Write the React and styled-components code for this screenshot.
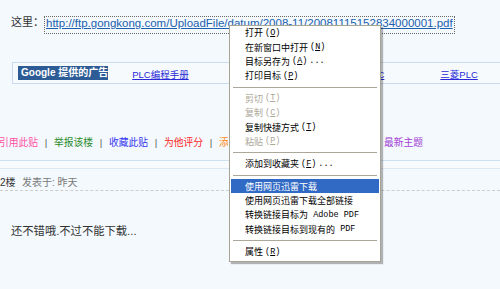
import styled, { createGlobalStyle } from 'styled-components';

const GlobalStyle = createGlobalStyle`
	html, body {
		margin: 0;
		padding: 0;
	}
	body {
		background: #f3f9fd;
		font-family: "Liberation Sans", "Noto Sans CJK SC", sans-serif;
		overflow: hidden;
	}
`;

// links and actions that sit under the context menu are kept for layout,
// but hidden (or clipped) the way the menu covers them
const adLinks = [
	{ text: 'PLC编程手册' },
	{ text: 'PLC培训', hidden: true },
	{ text: '西门子PLC', clip: '0 0 0 41px' },
	{ text: '三菱PLC' },
];

const actions = [
	{ text: '引用此贴', color: '#ff4fa3' },
	{ text: '举报该楼', color: '#2b8a2b' },
	{ text: '收藏此贴', color: '#3434f0' },
	{ text: '为他评分', color: '#ff1f1f' },
	{ text: '添加好友', color: '#ff8a1c', clip: '0 30px 0 0' },
	{ text: '发送短信', color: '#2b8a2b', hidden: true },
	{ text: '查看资料', color: '#3434f0', hidden: true },
	{ text: '最新主题', color: '#a23fd4' },
];

const menu = [
	{ label: '打开', key: 'O' },
	{ label: '在新窗口中打开', key: 'N' },
	{ label: '目标另存为', key: 'A', more: true },
	{ label: '打印目标', key: 'P' },
	'sep',
	{ label: '剪切', key: 'T', disabled: true },
	{ label: '复制', key: 'C', disabled: true },
	{ label: '复制快捷方式', key: 'T' },
	{ label: '粘贴', key: 'P', disabled: true },
	'sep',
	{ label: '添加到收藏夹', key: 'F', more: true },
	'sep',
	{ label: '使用网页迅雷下载', active: true },
	{ label: '使用网页迅雷下载全部链接' },
	{ label: '转换链接目标为', tail: 'Adobe PDF' },
	{ label: '转换链接目标到现有的', tail: 'PDF' },
	'sep',
	{ label: '属性', key: 'R' },
];

const App = () => {
	return (
		<>
			<GlobalStyle />
			<Page>
				<LinkLine>
					<Label>这里：</Label>
					<FileLink>
						http://ftp.gongkong.com/UploadFile/datum/2008-11/20081115152834000001.pdf
					</FileLink>
				</LinkLine>

				<AdBar>
					<AdBadge>Google 提供的广告</AdBadge>
					{adLinks.map((l) => (
						<AdCell key={l.text}>
							<AdLink $hidden={l.hidden} $clip={l.clip}>
								{l.text}
							</AdLink>
						</AdCell>
					))}
				</AdBar>

				<ActionRow>
					{actions.map((a, i) => (
						<ActionGroup key={a.text}>
							{i > 0 && <Pipe $hidden={a.hidden}>|</Pipe>}
							<Action $color={a.color} $hidden={a.hidden} $clip={a.clip}>
								{a.text}
							</Action>
						</ActionGroup>
					))}
				</ActionRow>

				<DoubleRule />

				<PostMeta>
					<Floor>2楼</Floor>
					<Posted>发表于: 昨天</Posted>
				</PostMeta>

				<DashedRule />

				<PostBody>还不错哦.不过不能下载...</PostBody>

				<ContextMenu>
					{menu.map((item, i) =>
						item === 'sep' ? (
							<MenuSeparator key={i} />
						) : (
							<MenuItem
								key={i}
								$active={item.active}
								$disabled={item.disabled}
							>
								{item.label}
								{item.key && (
									<Latin>
										(<u>{item.key}</u>)
									</Latin>
								)}
								{item.more && <Latin>...</Latin>}
								{item.tail && <Latin $wide> {item.tail}</Latin>}
							</MenuItem>
						)
					)}
				</ContextMenu>
			</Page>
		</>
	);
};

export default App;

const Page = styled.div`
	position: relative;
	width: 500px;
	height: 289px;
	overflow: hidden;
	background: #f3f9fd;
	display: flex;
	flex-direction: column;
`;

const LinkLine = styled.div`
	display: flex;
	align-items: flex-start;
	box-sizing: border-box;
	height: 34px;
	padding: 16px 0 0 11px;
	font-size: 11px;
	color: #333;
`;

const Label = styled.span`
	width: 33px;
	line-height: 12px;
	font-size: 11px;
`;

const FileLink = styled.a`
	display: inline-block;
	line-height: 12px;
	padding: 0 1px 4px 1px;
	border: 1px dotted #6a6a6a;
	color: #1c5fae;
	text-decoration: underline;
	font-family: "Liberation Sans", sans-serif;
	font-size: 11.5px;
	white-space: nowrap;
`;

const AdBar = styled.div`
	display: flex;
	align-items: center;
	box-sizing: border-box;
	height: 22px;
	margin: 28px 0 0 12px;
	padding-left: 5px;
	border: 1px solid #c9dcef;
	border-right: none;
	background: #f6fafd;
`;

const AdBadge = styled.span`
	box-sizing: border-box;
	width: 92px;
	height: 14px;
	line-height: 14px;
	padding-left: 3px;
	margin-right: 24px;
	background: #2d5b95;
	color: #fff;
	font-size: 10px;
	font-weight: bold;
	white-space: nowrap;
`;

const AdCell = styled.span`
	flex: 0 0 102.7px;
`;

const AdLink = styled.a`
	display: inline-block;
	font-size: 9.5px;
	color: #2a2ad8;
	text-decoration: underline;
	white-space: nowrap;
	visibility: ${(p) => (p.$hidden ? 'hidden' : 'visible')};
	clip-path: ${(p) => (p.$clip ? `inset(${p.$clip})` : 'none')};
`;

const ActionRow = styled.div`
	display: flex;
	align-items: center;
	height: 14px;
	margin: 51px 0 0 -1px;
	font-size: 9.75px;
	white-space: nowrap;
`;

const ActionGroup = styled.span`
	display: flex;
	align-items: center;
`;

const Pipe = styled.span`
	width: 2.5px;
	margin: 0 6.75px;
	color: #555;
	font-family: "Liberation Sans", sans-serif;
	visibility: ${(p) => (p.$hidden ? 'hidden' : 'visible')};
`;

const Action = styled.span`
	color: ${(p) => p.$color};
	visibility: ${(p) => (p.$hidden ? 'hidden' : 'visible')};
	clip-path: ${(p) => (p.$clip ? `inset(${p.$clip})` : 'none')};
`;

const DoubleRule = styled.div`
	height: 7px;
	margin-top: 11px;
	border-top: 1px solid #cfe1f1;
	border-bottom: 1px solid #dbe9f5;
	background: #f8fbfe;
`;

const PostMeta = styled.div`
	display: flex;
	align-items: center;
	height: 12px;
	margin-top: 6px;
	font-size: 10px;
	white-space: nowrap;
`;

const Floor = styled.span`
	color: #333;
	margin-right: 6.5px;
`;

const Posted = styled.span`
	color: #7a7a7a;
`;

const DashedRule = styled.div`
	margin-top: 3px;
	border-top: 1px dashed #cdcdcd;
`;

const PostBody = styled.div`
	margin: 33px 0 0 11px;
	line-height: 14px;
	font-size: 11.3px;
	color: #333;
`;

const ContextMenu = styled.div`
	position: absolute;
	left: 229px;
	top: 24.5px;
	width: 152px;
	box-sizing: border-box;
	padding: 0 1px 2px 1px;
	background: #fff;
	border: 1px solid #a7a496;
	box-shadow: 2px 2px 1px rgba(0, 0, 0, 0.28);
	font-family: "Liberation Mono", "Noto Sans CJK SC", monospace;
	font-size: 9px;
`;

const MenuItem = styled.div`
	display: flex;
	align-items: center;
	height: 14.4px;
	padding-left: 14px;
	white-space: nowrap;
	background: ${(p) => (p.$active ? '#316ac5' : 'transparent')};
	color: ${(p) => (p.$active ? '#fff' : p.$disabled ? '#aca899' : '#000')};
`;

const Latin = styled.span`
	margin-left: ${(p) => (p.$wide ? '0' : '2px')};
	font-family: "Liberation Mono", monospace;
	font-size: 8.5px;
	white-space: pre;
`;

const MenuSeparator = styled.div`
	display: flex;
	align-items: center;
	height: 8px;
	padding: 0 2px;

	&::after {
		content: '';
		flex: 1;
		border-top: 1px solid #aca899;
	}
`;
